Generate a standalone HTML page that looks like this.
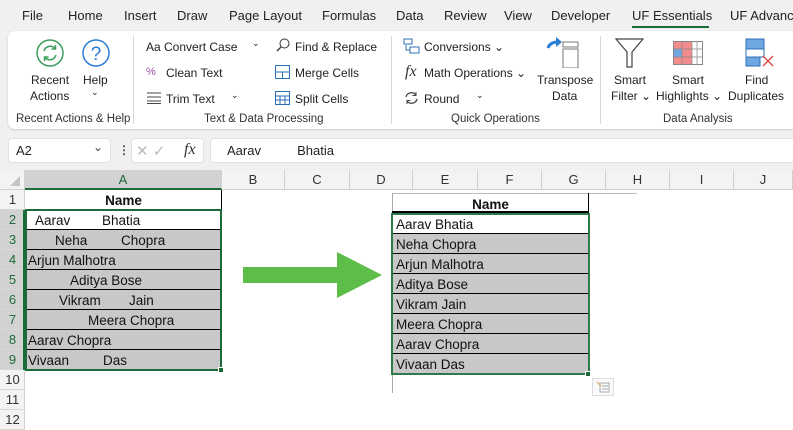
<!DOCTYPE html>
<html><head><meta charset="utf-8"><style>
*{margin:0;padding:0;box-sizing:border-box}
body{width:793px;height:429px;overflow:hidden;background:#fff;font-family:"Liberation Sans",sans-serif;position:relative}
.a{position:absolute;white-space:nowrap}
.tab{position:absolute;top:8px;font-size:13px;color:#222;white-space:nowrap}
.rb{font-size:12px;color:#222}
.gl{font-size:11.5px;color:#333}
.cell{font-size:13.5px;color:#111}
.ch{position:absolute;top:170px;height:20px;font-size:13px;color:#333;text-align:center;line-height:20px;border-right:1px solid #d0d0d0}
.rh{position:absolute;left:0;width:25px;height:20px;font-size:13px;color:#333;text-align:center;line-height:20px;border-bottom:1px solid #d8d8d8}
</style></head><body>
<div class="a" style="left:0;top:0;width:793px;height:170px;background:#f0f0f0"></div>
<div class="tab" style="left:22px">File</div>
<div class="tab" style="left:68px">Home</div>
<div class="tab" style="left:124px">Insert</div>
<div class="tab" style="left:177px">Draw</div>
<div class="tab" style="left:229px">Page Layout</div>
<div class="tab" style="left:322px">Formulas</div>
<div class="tab" style="left:396px">Data</div>
<div class="tab" style="left:444px">Review</div>
<div class="tab" style="left:504px">View</div>
<div class="tab" style="left:551px">Developer</div>
<div class="tab" style="left:632px">UF Essentials</div>
<div class="a" style="left:632px;top:26px;width:77px;height:2px;background:#1e6b3a"></div>
<div class="tab" style="left:730px">UF Advance</div>
<div class="a" style="left:8px;top:31px;width:800px;height:98px;background:#fff;border-radius:7px;box-shadow:0 1px 2px #ccc"></div>
<div class="a" style="left:133px;top:36px;width:1px;height:88px;background:#d8d8d8"></div>
<div class="a" style="left:391px;top:36px;width:1px;height:88px;background:#d8d8d8"></div>
<div class="a" style="left:600px;top:36px;width:1px;height:88px;background:#d8d8d8"></div>
<svg class="a" style="left:35px;top:38px" width="30" height="30"><circle cx="15" cy="15" r="13" fill="none" stroke="#3a9d5d" stroke-width="1.5"/><path d="M9 13a6.5 6.5 0 0 1 11.5-2M21 17a6.5 6.5 0 0 1-11.5 2" fill="none" stroke="#3a9d5d" stroke-width="1.5"/><path d="M20.5 7v4h-4M9.5 23v-4h4" fill="none" stroke="#3a9d5d" stroke-width="1.5"/></svg>
<div class="a rb" style="left:31px;top:73px">Recent</div>
<div class="a rb" style="left:30px;top:89px">Actions</div>
<svg class="a" style="left:81px;top:38px" width="30" height="30"><circle cx="15" cy="15" r="13" fill="none" stroke="#2b7cd3" stroke-width="1.5"/><text x="15" y="22" font-size="19" text-anchor="middle" fill="#2b7cd3" font-family="Liberation Sans">?</text></svg>
<div class="a rb" style="left:83px;top:73px">Help</div>
<div class="a rb" style="left:91px;top:87px;font-size:9px">⌄</div>
<div class="a gl" style="left:16px;top:113px">Recent Actions &amp; Help</div>
<div class="a rb" style="left:146px;top:40px">Aa Convert Case</div>
<div class="a rb" style="left:252px;top:38px;font-size:9px">⌄</div>
<div class="a rb" style="left:146px;top:66px;color:#a050a0;font-size:11px">%</div>
<div class="a rb" style="left:166px;top:66px">Clean Text</div>
<svg class="a" style="left:147px;top:92px" width="14" height="12"><path d="M0 1h14M0 5h14M0 9h14M0 11.5h14" stroke="#444" stroke-width="1"/></svg>
<div class="a rb" style="left:166px;top:92px">Trim Text</div>
<div class="a rb" style="left:231px;top:90px;font-size:9px">⌄</div>
<svg class="a" style="left:276px;top:38px" width="14" height="14"><circle cx="8.5" cy="5.5" r="4.5" fill="none" stroke="#333"/><path d="M5 9l-4 4" stroke="#333" stroke-width="1.3"/></svg>
<div class="a rb" style="left:295px;top:40px">Find &amp; Replace</div>
<svg class="a" style="left:275px;top:65px" width="15" height="14"><rect x=".5" y=".5" width="14" height="13" fill="none" stroke="#2b6fb8"/><path d="M.5 7h14M7.5 7v7" stroke="#2b6fb8"/></svg>
<div class="a rb" style="left:295px;top:66px">Merge Cells</div>
<svg class="a" style="left:275px;top:91px" width="15" height="14"><rect x=".5" y=".5" width="14" height="13" fill="none" stroke="#2b6fb8"/><path d="M.5 5h14M.5 9h14M5 5v8M10 5v8" stroke="#2b6fb8"/></svg>
<div class="a rb" style="left:295px;top:92px">Split Cells</div>
<div class="a gl" style="left:204px;top:113px">Text &amp; Data Processing</div>
<svg class="a" style="left:403px;top:38px" width="17" height="17"><rect x="1" y="1" width="8" height="5" fill="none" stroke="#2b6fb8"/><rect x="7" y="9" width="9" height="6" fill="none" stroke="#2b6fb8"/><path d="M3 7v5h4" fill="none" stroke="#2b6fb8"/></svg>
<div class="a rb" style="left:424px;top:40px">Conversions ⌄</div>
<div class="a" style="left:405px;top:63px;font-family:'Liberation Serif',serif;font-style:italic;font-size:16px;color:#333">fx</div>
<div class="a rb" style="left:424px;top:66px">Math Operations ⌄</div>
<svg class="a" style="left:404px;top:91px" width="15" height="14"><path d="M2 6a5.5 5 0 0 1 10-2M13 8a5.5 5 0 0 1-10 2" fill="none" stroke="#444" stroke-width="1.3"/><path d="M12 1v3.5h-3.5M3 13v-3.5h3.5" fill="none" stroke="#444"/></svg>
<div class="a rb" style="left:424px;top:92px">Round</div>
<div class="a rb" style="left:476px;top:90px;font-size:9px">⌄</div>
<svg class="a" style="left:545px;top:36px" width="38" height="32"><path d="M3 12q2-6 10-6" fill="none" stroke="#2b7cd3" stroke-width="3"/><path d="M11 1l6 5-6 5z" fill="#2b7cd3"/><rect x="18" y="6" width="15" height="5" fill="none" stroke="#777"/><rect x="18" y="13" width="15" height="19" fill="none" stroke="#777"/></svg>
<div class="a rb" style="left:537px;top:73px">Transpose</div>
<div class="a rb" style="left:552px;top:89px">Data</div>
<div class="a gl" style="left:451px;top:113px">Quick Operations</div>
<svg class="a" style="left:615px;top:38px" width="30" height="30"><path d="M1 1h27l-11 13v15h-5v-15z" fill="none" stroke="#444" stroke-width="1.2"/></svg>
<div class="a rb" style="left:614px;top:73px">Smart</div>
<div class="a rb" style="left:611px;top:89px">Filter ⌄</div>
<svg class="a" style="left:673px;top:41px" width="30" height="24"><rect x=".5" y=".5" width="29" height="23" fill="#fff" stroke="#888"/><rect x="1" y="1" width="18" height="7" fill="#f28b8b"/><rect x="1" y="8" width="8" height="8" fill="#6fa8e0"/><rect x="9" y="8" width="10" height="8" fill="#f28b8b"/><rect x="1" y="16" width="18" height="7" fill="#f28b8b"/><path d="M9 1v22M19 1v22M24 1v22M1 8h28M1 16h28" stroke="#888" stroke-width=".7"/></svg>
<div class="a rb" style="left:672px;top:73px">Smart</div>
<div class="a rb" style="left:656px;top:89px">Highlights ⌄</div>
<svg class="a" style="left:745px;top:38px" width="30" height="30"><rect x="1" y="1" width="18" height="10" fill="#6fa8e0" stroke="#2b6fb8"/><rect x="1" y="11" width="18" height="8" fill="#fff" stroke="#2b6fb8"/><rect x="1" y="19" width="14" height="9" fill="#6fa8e0" stroke="#2b6fb8"/><path d="M18 18l10 10M28 18l-10 10" stroke="#e04040" stroke-width="1.3"/></svg>
<div class="a rb" style="left:745px;top:73px">Find</div>
<div class="a rb" style="left:728px;top:89px">Duplicates</div>
<div class="a gl" style="left:663px;top:113px">Data Analysis</div>
<div class="a" style="left:8px;top:138px;width:103px;height:25px;background:#fff;border-radius:4px;border:1px solid #e2e2e2"></div>
<div class="a" style="left:16px;top:143px;font-size:13px;color:#222">A2</div>
<div class="a" style="left:93px;top:140px;font-size:12px;color:#444">⌄</div>
<div class="a" style="left:118px;top:143px;font-size:12px;color:#555;font-weight:bold">⋮</div>
<div class="a" style="left:131px;top:138px;width:73px;height:25px;background:#fff;border-radius:4px;border:1px solid #e2e2e2"></div>
<div class="a" style="left:136px;top:142px;font-size:15px;color:#bbb">✕ ✓</div>
<div class="a" style="left:184px;top:141px;font-family:'Liberation Serif',serif;font-style:italic;font-size:16px;color:#333">fx</div>
<div class="a" style="left:210px;top:138px;width:600px;height:25px;background:#fff;border-radius:4px;border:1px solid #e2e2e2"></div>
<div class="a" style="left:227px;top:143px;font-size:13px;color:#222">Aarav&nbsp;&nbsp;&nbsp;&nbsp;&nbsp;&nbsp;&nbsp;&nbsp;&nbsp;&nbsp;Bhatia</div>
<div class="a" style="left:0;top:170px;width:793px;height:20px;background:#f3f3f3;border-bottom:1px solid #d0d0d0"></div>
<div class="ch" style="left:0;width:25px"><svg width="25" height="20"><path d="M20 6v10h-10z" fill="#c4c4c4"/></svg></div>
<div class="ch" style="left:25px;width:197px;background:#d2d2d2;color:#1e6b3a;border-bottom:2px solid #1e6b3a">A</div>
<div class="ch" style="left:222px;width:63px">B</div>
<div class="ch" style="left:285px;width:65px">C</div>
<div class="ch" style="left:350px;width:63px">D</div>
<div class="ch" style="left:413px;width:65px">E</div>
<div class="ch" style="left:478px;width:64px">F</div>
<div class="ch" style="left:542px;width:64px">G</div>
<div class="ch" style="left:606px;width:64px">H</div>
<div class="ch" style="left:670px;width:64px">I</div>
<div class="ch" style="left:734px;width:59px">J</div>
<div class="a" style="left:0;top:190px;width:25px;height:239px;background:#f3f3f3;border-right:1px solid #d0d0d0"></div>
<div class="rh" style="top:190px">1</div>
<div class="rh" style="top:210px;background:#d2d2d2;color:#1e6b3a">2</div>
<div class="rh" style="top:230px;background:#d2d2d2;color:#1e6b3a">3</div>
<div class="rh" style="top:250px;background:#d2d2d2;color:#1e6b3a">4</div>
<div class="rh" style="top:270px;background:#d2d2d2;color:#1e6b3a">5</div>
<div class="rh" style="top:290px;background:#d2d2d2;color:#1e6b3a">6</div>
<div class="rh" style="top:310px;background:#d2d2d2;color:#1e6b3a">7</div>
<div class="rh" style="top:330px;background:#d2d2d2;color:#1e6b3a">8</div>
<div class="rh" style="top:350px;background:#d2d2d2;color:#1e6b3a">9</div>
<div class="rh" style="top:370px">10</div>
<div class="rh" style="top:390px">11</div>
<div class="rh" style="top:410px">12</div>
<div class="a" style="left:23px;top:210px;width:2px;height:160px;background:#1e6b3a"></div>
<div class="a" style="left:25px;top:190px;width:197px;height:20px;border-right:1px solid #000"></div>
<div class="a cell" style="left:25px;top:193px;width:197px;text-align:center;font-weight:bold">Name</div>
<div class="a" style="left:25px;top:230px;width:197px;height:140px;background:#c8c8c8"></div>
<div class="a" style="left:25px;top:229px;width:197px;height:1px;background:#000"></div>
<div class="a" style="left:25px;top:249px;width:197px;height:1px;background:#000"></div>
<div class="a" style="left:25px;top:269px;width:197px;height:1px;background:#000"></div>
<div class="a" style="left:25px;top:289px;width:197px;height:1px;background:#000"></div>
<div class="a" style="left:25px;top:309px;width:197px;height:1px;background:#000"></div>
<div class="a" style="left:25px;top:329px;width:197px;height:1px;background:#000"></div>
<div class="a" style="left:25px;top:349px;width:197px;height:1px;background:#000"></div>
<div class="a" style="left:25px;top:209px;width:197px;height:162px;border:2px solid #1e6b3a"></div>
<div class="a" style="left:218px;top:367px;width:6px;height:6px;background:#1e6b3a;border:1px solid #fff"></div>
<div class="a cell" style="left:35px;top:213px">Aarav</div><div class="a cell" style="left:102px;top:213px">Bhatia</div>
<div class="a cell" style="left:55px;top:233px">Neha</div><div class="a cell" style="left:121px;top:233px">Chopra</div>
<div class="a cell" style="left:28px;top:253px">Arjun Malhotra</div>
<div class="a cell" style="left:70px;top:273px">Aditya Bose</div>
<div class="a cell" style="left:59px;top:293px">Vikram</div><div class="a cell" style="left:129px;top:293px">Jain</div>
<div class="a cell" style="left:88px;top:313px">Meera Chopra</div>
<div class="a cell" style="left:28px;top:333px">Aarav Chopra</div>
<div class="a cell" style="left:28px;top:353px">Vivaan</div><div class="a cell" style="left:103px;top:353px">Das</div>
<svg class="a" style="left:240px;top:248px" width="150" height="55"><path d="M3 19h94v-15l45 23-45 23v-15h-94z" fill="#5cbd48"/></svg>
<div class="a" style="left:392px;top:193px;width:245px;height:1px;background:#bbb"></div>
<div class="a" style="left:392px;top:193px;width:1px;height:200px;background:#aaa"></div>
<div class="a" style="left:392px;top:193px;width:197px;height:20px;border-right:1px solid #000;border-bottom:2px solid #000"></div>
<div class="a cell" style="left:392px;top:197px;width:197px;text-align:center;font-weight:bold">Name</div>
<div class="a" style="left:392px;top:233px;width:197px;height:140px;background:#c8c8c8"></div>
<div class="a" style="left:392px;top:233px;width:197px;height:1px;background:#000"></div>
<div class="a" style="left:392px;top:253px;width:197px;height:1px;background:#000"></div>
<div class="a" style="left:392px;top:273px;width:197px;height:1px;background:#000"></div>
<div class="a" style="left:392px;top:293px;width:197px;height:1px;background:#000"></div>
<div class="a" style="left:392px;top:313px;width:197px;height:1px;background:#000"></div>
<div class="a" style="left:392px;top:333px;width:197px;height:1px;background:#000"></div>
<div class="a" style="left:392px;top:353px;width:197px;height:1px;background:#000"></div>
<div class="a" style="left:391px;top:213px;width:199px;height:162px;border:2px solid #2f7a4a"></div>
<div class="a" style="left:585px;top:371px;width:6px;height:6px;background:#1e6b3a;border:1px solid #fff"></div>
<div class="a cell" style="left:396px;top:217px">Aarav Bhatia</div>
<div class="a cell" style="left:396px;top:237px">Neha Chopra</div>
<div class="a cell" style="left:396px;top:257px">Arjun Malhotra</div>
<div class="a cell" style="left:396px;top:277px">Aditya Bose</div>
<div class="a cell" style="left:396px;top:297px">Vikram Jain</div>
<div class="a cell" style="left:396px;top:317px">Meera Chopra</div>
<div class="a cell" style="left:396px;top:337px">Aarav Chopra</div>
<div class="a cell" style="left:396px;top:357px">Vivaan Das</div>
<div class="a" style="left:592px;top:378px;width:22px;height:18px;border:1px solid #ddd;background:#fafafa"></div>
<svg class="a" style="left:596px;top:381px" width="14" height="12"><rect x="4" y="2" width="9" height="9" fill="none" stroke="#aaa"/><path d="M6 5h6M6 8h6" stroke="#aaa"/><path d="M1 1l4 4" stroke="#e0a060"/></svg>
</body></html>
